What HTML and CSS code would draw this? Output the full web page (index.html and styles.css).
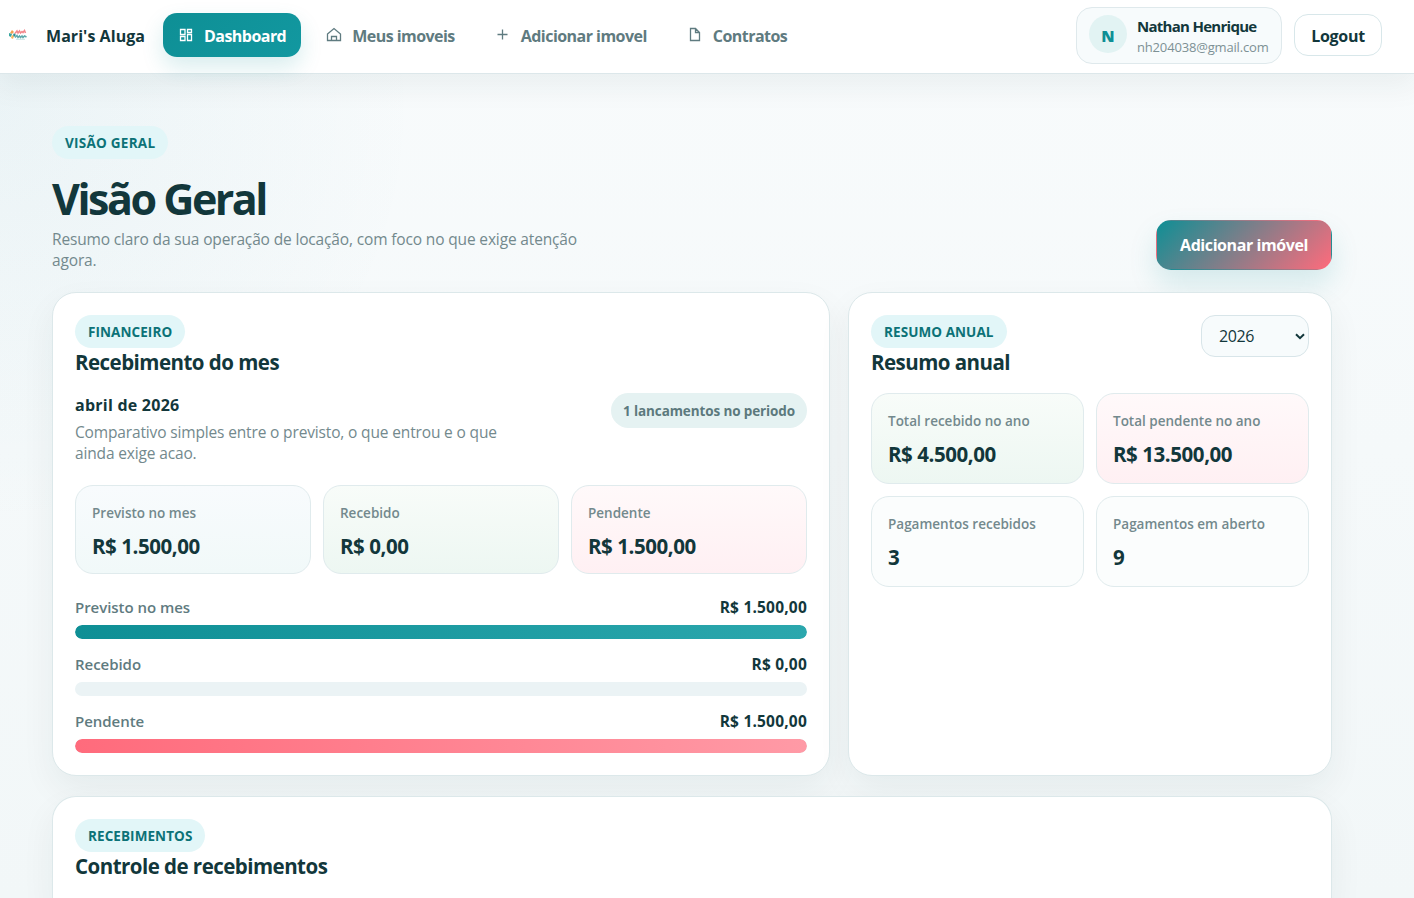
FILE: index.html
```
<!DOCTYPE html>
<html lang="pt-BR">
<head>
    <meta charset="utf-8">
    <title>Mari's Aluga</title>
    <link rel="stylesheet" href="styles.css">
</head>
<body>
    <header class="topbar">
        <a class="brand" href="#">
            <svg class="brand-logo" width="20" height="12" viewBox="0 0 20 12">
                <path d="M4 1l2 2-2 2-2-1z" fill="#f3a14e"/>
                <path d="M1 4l3 1-1 3-2-1z" fill="#3aa6a0"/>
                <path d="M4 6l2 1-1 3-2-1z" fill="#f6b65c"/>
                <path d="M6 4l2 2-2 2-1-2z" fill="#2f8f96"/>
                <path d="M7 4.500l2-2.500 1 2 1.500-2 1 2 1.500-1.500 1 1 1.500-2 1 2.500" fill="none" stroke="#f3888c" stroke-width="1.500"/>
                <path d="M7 8.500l2-2 1 2 1.500-1.500 1 1.500 1.500-1.500 1 1.500 1.500-1.500 2 1" fill="none" stroke="#5fa9ab" stroke-width="1.500"/>
                <path d="M8 10.300h9" stroke="#b9dcdc" stroke-width=".8"/>
            </svg>
            <span class="brand-name">Mari's Aluga</span>
        </a>
        <nav class="nav">
            <a class="nav-link active" href="#">
                <svg class="nav-icon" width="18" height="18" viewBox="0 0 18 18">
                    <path d="M3.500 3.500h4.500v5h-4.500zM10.500 3.500h4v3h-4zM3.500 10.500h4.500v4h-4.500zM10.500 8.500h4v6h-4z"/>
                </svg>
                <span class="nav-text">Dashboard</span>
            </a>
            <a class="nav-link" href="#">
                <svg class="nav-icon" width="18" height="18" viewBox="0 0 18 18">
                    <path d="M2.500 8L9 2.500 15.500 8v6.500h-13zM6.500 14.500v-4h5v4"/>
                </svg>
                <span class="nav-text">Meus imoveis</span>
            </a>
            <a class="nav-link" href="#">
                <svg class="nav-icon" width="18" height="18" viewBox="0 0 18 18">
                    <path d="M8.500 3.500v10M3.500 8.500h10"/>
                </svg>
                <span class="nav-text">Adicionar imovel</span>
            </a>
            <a class="nav-link" href="#">
                <svg class="nav-icon" width="18" height="18" viewBox="0 0 18 18">
                    <path d="M4.500 2.500h5l4 4v8h-9zM9.500 2.500v4h4"/>
                </svg>
                <span class="nav-text">Contratos</span>
            </a>
        </nav>
        <div class="user-area">
            <div class="user-chip">
                <span class="avatar">N</span>
                <div class="user-info">
                    <strong class="user-name">Nathan Henrique</strong>
                    <span class="user-mail">nh204038@gmail.com</span>
                </div>
            </div>
            <button type="button" class="logout">Logout</button>
        </div>
    </header>

    <main class="page">
        <section class="page-head">
            <div>
                <span class="pill pill-page">Visão Geral</span>
                <h1 class="page-title">Visão Geral</h1>
                <p class="lead lead-page">Resumo claro da sua operação de locação, com foco no que exige atenção<br>agora.</p>
            </div>
            <a class="btn-add" href="#">Adicionar imóvel</a>
        </section>

        <div class="panels">
            <section class="card">
                <span class="pill">Financeiro</span>
                <h2 class="card-title">Recebimento do mes</h2>
                <div class="month">
                    <div>
                        <strong class="month-name">abril de 2026</strong>
                        <p class="lead">Comparativo simples entre o previsto, o que entrou e o que<br>ainda exige acao.</p>
                    </div>
                    <span class="count">1 lancamentos no periodo</span>
                </div>
                <div class="stats stats-month">
                    <div class="stat blue"><span class="stat-label">Previsto no mes</span><strong class="stat-value">R$ 1.500,00</strong></div>
                    <div class="stat green"><span class="stat-label">Recebido</span><strong class="stat-value">R$ 0,00</strong></div>
                    <div class="stat red"><span class="stat-label">Pendente</span><strong class="stat-value">R$ 1.500,00</strong></div>
                </div>
                <div class="bars">
                    <div class="bar-row">
                        <div class="bar-head"><span class="bar-label">Previsto no mes</span><strong class="bar-value">R$ 1.500,00</strong></div>
                        <div class="track"><div class="fill fill-teal" style="width: 100%"></div></div>
                    </div>
                    <div class="bar-row">
                        <div class="bar-head"><span class="bar-label">Recebido</span><strong class="bar-value">R$ 0,00</strong></div>
                        <div class="track"><div class="fill fill-teal" style="width: 0%"></div></div>
                    </div>
                    <div class="bar-row">
                        <div class="bar-head"><span class="bar-label">Pendente</span><strong class="bar-value">R$ 1.500,00</strong></div>
                        <div class="track"><div class="fill fill-red" style="width: 100%"></div></div>
                    </div>
                </div>
            </section>

            <section class="card">
                <div class="card-head">
                    <div>
                        <span class="pill">Resumo anual</span>
                        <h2 class="card-title">Resumo anual</h2>
                    </div>
                    <div class="year">
                        <span>2026</span>
                        <svg width="10" height="7" viewBox="0 0 10 7"><path d="M1 1.200l4 4 4-4" fill="none" stroke="#12373b" stroke-width="2"/></svg>
                    </div>
                </div>
                <div class="stats stats-year">
                    <div class="stat green"><span class="stat-label">Total recebido no ano</span><strong class="stat-value">R$ 4.500,00</strong></div>
                    <div class="stat red"><span class="stat-label">Total pendente no ano</span><strong class="stat-value">R$ 13.500,00</strong></div>
                    <div class="stat"><span class="stat-label">Pagamentos recebidos</span><strong class="stat-value">3</strong></div>
                    <div class="stat"><span class="stat-label">Pagamentos em aberto</span><strong class="stat-value">9</strong></div>
                </div>
            </section>
        </div>

        <section class="card card-wide">
            <span class="pill">Recebimentos</span>
            <h2 class="card-title">Controle de recebimentos</h2>
        </section>
    </main>
</body>
</html>
```
FILE: styles.css
```
* {
    box-sizing: border-box;
}
html {
    height: 100%;
    overflow: hidden;
}
body {
    display: flex;
    flex-direction: column;
    margin: 0;
    height: 100%;
    overflow: hidden;
    font: 16px/21px "Open Sans", "Noto Sans", sans-serif;
    color: #12373b;
    background: radial-gradient(circle at 0 12%, rgba(14, 120, 149, 0.05), transparent 420px),
                linear-gradient(180deg, #f8fbfc 0%, #f2f7f8 100%);
}
a {
    color: inherit;
    text-decoration: none;
}
h1, h2, p {
    margin: 0;
}

/* top bar */
.topbar {
    display: flex;
    flex-shrink: 0;
    align-items: center;
    position: relative;
    height: 74px;
    padding: 0 32px 3px 8px;
    background: #fff;
    border-bottom: 1px solid #dce7ea;
    box-shadow: 0 8px 30px 4px rgba(18, 55, 59, 0.06);
}
.brand {
    display: flex;
    align-items: center;
    gap: 18px;
    width: 155px;
}
.brand-name {
    padding-top: 2px;
    font-weight: 700;
    letter-spacing: 0.05px;
    white-space: nowrap;
}
.nav {
    display: flex;
    gap: 10px;
}
.nav-link {
    display: flex;
    align-items: center;
    gap: 9px;
    height: 44px;
    padding: 0 15px 0 14px;
    border-radius: 14px;
    color: #5f7b80;
    font-weight: 700;
    letter-spacing: -0.54px;
    white-space: nowrap;
}
.nav-text {
    padding-top: 3px;
}
.nav-icon {
    fill: none;
    stroke: currentColor;
    stroke-width: 1.3;
}
.active {
    color: #fff;
    background: linear-gradient(135deg, #0e8f95, #1298a0);
    box-shadow: 0 10px 22px rgba(14, 143, 149, 0.16);
}
.user-area {
    display: flex;
    align-items: center;
    gap: 12px;
    margin-left: auto;
}
.user-chip {
    display: flex;
    align-items: center;
    gap: 10px;
    width: 206px;
    height: 57px;
    padding: 0 12px 2px;
    border: 1px solid #dfe9ec;
    border-radius: 16px;
    background: #f7fbfc;
}
.avatar {
    width: 38px;
    height: 38px;
    border-radius: 50%;
    background: #e2f3f3;
    color: #0e8f95;
    font-weight: 800;
    line-height: 42px;
    text-align: center;
}
.user-info {
    display: flex;
    flex-direction: column;
    padding-top: 6px;
}
.user-name {
    font-size: 15px;
    letter-spacing: -0.72px;
    white-space: nowrap;
}
.user-mail {
    font-size: 13px;
    letter-spacing: -0.17px;
    color: #7d9195;
}
.logout {
    width: 88px;
    height: 42px;
    padding: 3px 0 0;
    border: 1px solid #d8e7ea;
    border-radius: 14px;
    background: #fff;
    color: #12373b;
    font: inherit;
    font-weight: 700;
    letter-spacing: -0.3px;
}

/* page heading */
.page {
    flex: 1;
    display: flex;
    flex-direction: column;
    width: 1332px;
    padding: 52px 0 0 52px;
}
.page-head {
    display: flex;
    justify-content: space-between;
    align-items: flex-end;
    margin-bottom: 22px;
}
.page-title {
    margin: 15px 0 6px;
    font-size: 43px;
    line-height: 49px;
    letter-spacing: -2.49px;
}
.pill {
    display: block;
    width: fit-content;
    height: 33px;
    padding: 0 13px;
    border-radius: 17px;
    background: #e2f6f8;
    color: #0c7277;
    font-size: 13.5px;
    font-weight: 700;
    line-height: 34px;
    letter-spacing: 0.08px;
    text-transform: uppercase;
}
.pill-page {
    letter-spacing: 0.26px;
}
.lead {
    color: #73898d;
    font-size: 15.5px;
    letter-spacing: -0.15px;
    white-space: nowrap;
}
.lead-page {
    margin-bottom: -1px;
}
.btn-add {
    width: 176px;
    height: 50px;
    border: 1px solid transparent;
    border-radius: 15px;
    background: linear-gradient(135deg, #0e8f95, #ff6b7c);
    box-shadow: 0 14px 28px rgba(14, 143, 149, 0.15);
    color: #fff;
    font-weight: 700;
    line-height: 49px;
    letter-spacing: -0.42px;
    text-align: center;
}

/* cards */
.panels {
    display: grid;
    grid-template-columns: 778px 484px;
    gap: 18px;
}
.card {
    padding: 22px;
    border: 1px solid #dce8ea;
    border-radius: 24px;
    background: #fff;
    box-shadow: 0 14px 34px rgba(18, 55, 59, 0.06);
}
.panels .card {
    height: 484px;
}
/* runs on to the bottom of the window */
.card-wide {
    flex: 1;
    margin-top: 20px;
    border-bottom: 0;
    border-radius: 24px 24px 0 0;
}
.card-title {
    font-size: 20.5px;
    line-height: 29px;
    letter-spacing: -0.53px;
}
.card-head {
    display: flex;
    justify-content: space-between;
    align-items: flex-start;
}
.month {
    display: flex;
    justify-content: space-between;
    align-items: flex-start;
    margin-top: 16px;
}
.month-name {
    display: block;
    padding: 1px 0 6px;
    line-height: 22px;
    letter-spacing: 0.24px;
}
.count {
    height: 35px;
    padding: 0 12px;
    border-radius: 18px;
    background: #e5f2f2;
    color: #5c797d;
    font-size: 13.5px;
    font-weight: 700;
    line-height: 36px;
    letter-spacing: -0.12px;
}
.year {
    display: flex;
    align-items: center;
    justify-content: space-between;
    width: 108px;
    height: 42px;
    padding: 1px 3px 0 17px;
    border: 1px solid #d8e5e9;
    border-radius: 14px;
    background: #f7fbfc;
    letter-spacing: -0.4px;
}

/* stat boxes */
.stats {
    display: grid;
    gap: 12px;
}
.stats-month {
    grid-template-columns: repeat(3, 1fr);
    grid-auto-rows: 89px;
    margin-top: 21px;
}
.stats-year {
    grid-template-columns: repeat(2, 1fr);
    grid-auto-rows: 91px;
    margin-top: 16px;
}
.stat {
    padding: 16px 16px 0;
    border: 1px solid #e0ebed;
    border-radius: 18px;
    background: #fbfdfd;
}
.blue {
    background: linear-gradient(180deg, #f8fbfd, #f1f9f9);
}
.green {
    background: linear-gradient(180deg, #f8fcf9, #edf7f2);
}
.red {
    background: linear-gradient(180deg, #fff9fa, #fff0f3);
}
.stat-label {
    display: block;
    color: #73898d;
    font-size: 13.5px;
    font-weight: 600;
    line-height: 22px;
}
.stat-value {
    display: block;
    margin-top: 9px;
    font-size: 20.5px;
    line-height: 26px;
    letter-spacing: -0.43px;
}

/* progress bars */
.bars {
    display: grid;
    gap: 15px;
    margin-top: 23px;
}
.bar-head {
    display: flex;
    justify-content: space-between;
    margin-bottom: 7px;
    font-size: 15px;
}
.bar-label {
    color: #5f7b80;
    font-weight: 600;
    letter-spacing: -0.04px;
}
.bar-value {
    font-size: 15.5px;
    letter-spacing: 0.2px;
}
.track {
    height: 14px;
    border-radius: 7px;
    background: #ebf3f5;
    overflow: hidden;
}
.fill {
    height: 100%;
    border-radius: 7px;
}
.fill-teal {
    background: linear-gradient(90deg, #0e8f95, #2ba7ad);
}
.fill-red {
    background: linear-gradient(90deg, #ff6b7c, #ff9aa6);
}
```
